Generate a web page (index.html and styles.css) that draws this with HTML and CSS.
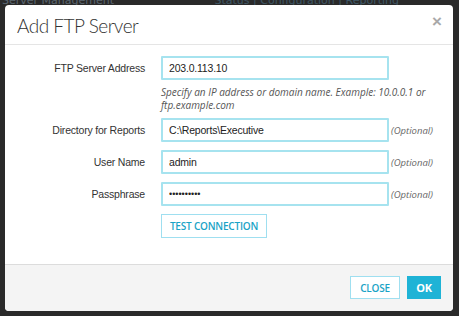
FILE: index.html
```html
<!DOCTYPE html>
<html lang="en">
<head>
    <meta charset="UTF-8">
    <meta name="viewport" content="width=device-width, initial-scale=1.0">
    <title>Add FTP Server</title>
    <link rel="stylesheet" href="styles.css">
</head>
<body>
    <div class="backdrop-bar">
        <span class="crumb">Server Management</span>
        <span class="tabs">Status | Configuration | Reporting</span>
    </div>
    <div class="modal">
        <div class="modal-header">
            <h1>Add FTP Server</h1>
            <span class="close-x">&times;</span>
        </div>
        <form class="modal-body">
            <label for="address">FTP Server Address</label>
            <input type="text" id="address" value="203.0.113.10">
            <span></span>

            <p class="help">Specify an IP address or domain name. Example: 10.0.0.1 or ftp.example.com</p>

            <label for="dir">Directory for Reports</label>
            <input type="text" id="dir" value="C:\Reports\Executive">
            <span class="optional">(Optional)</span>

            <label for="user">User Name</label>
            <input type="text" id="user" value="admin">
            <span class="optional">(Optional)</span>

            <label for="pass">Passphrase</label>
            <input type="password" id="pass" class="secret" value="secretpwd1">
            <span class="optional">(Optional)</span>

            <div class="test-row">
                <button type="button" class="btn btn-outline">TEST CONNECTION</button>
            </div>
        </form>
        <div class="modal-footer">
            <button type="button" class="btn btn-outline">CLOSE</button>
            <button type="button" class="btn btn-primary">OK</button>
        </div>
    </div>
</body>
</html>
```

FILE: styles.css
```css
* {
    margin: 0;
    padding: 0;
    box-sizing: border-box;
}

body {
    width: 459px;
    height: 316px;
    overflow: hidden;
    background: #2a2a2a;
    padding: 5px 6px 5px 5px;
    font-family: Tahoma, "DejaVu Sans", "Liberation Sans", sans-serif;
    position: relative;
}

.backdrop-bar {
    position: absolute;
    top: -6px;
    left: 2px;
    right: 0;
    display: flex;
    justify-content: space-between;
    color: #5a6670;
    font-size: 11px;
}

.tabs {
    margin-right: 60px;
    color: #3f5866;
}

.modal {
    position: relative;
    width: 448px;
    height: 306px;
    background: #fff;
    border-radius: 4px;
    display: flex;
    flex-direction: column;
    overflow: hidden;
}

.modal-header {
    height: 40px;
    border-bottom: 1px solid #e5e5e5;
    padding: 0 12px;
    display: flex;
    align-items: center;
    justify-content: space-between;
}

.modal-header h1 {
    font-family: Lato, "Open Sans", sans-serif;
    font-weight: 300;
    font-size: 19px;
    letter-spacing: -0.5px;
    color: #333;
    margin-top: 1px;
}

.close-x {
    font-family: "Liberation Sans", sans-serif;
    font-size: 17px;
    font-weight: bold;
    color: #a9a9a9;
    margin-top: -6px;
    margin-right: -1px;
}

.modal-body {
    flex: 1;
    display: grid;
    grid-template-columns: 140px 228px auto;
    column-gap: 16px;
    row-gap: 8px;
    align-content: start;
    align-items: center;
    padding: 11px 0 0 0;
}

.modal-body label {
    text-align: right;
    font-family: "Liberation Sans", Arial, sans-serif;
    font-size: 10.5px;
    letter-spacing: -0.2px;
    color: #333;
}

.modal-body input {
    height: 24px;
    width: 228px;
    border: 2px solid #a6e3ef;
    border-radius: 1px;
    padding: 0 6px;
    font-family: "Liberation Sans", Arial, sans-serif;
    font-size: 10.5px;
    letter-spacing: -0.2px;
    color: #222;
    outline: none;
}

.modal-body input.secret {
    font-size: 9px;
    letter-spacing: 0;
}

.optional {
    margin-left: -14px;
    font-family: "Open Sans", sans-serif;
    font-style: italic;
    font-size: 9.5px;
    color: #666;
}

.help {
    grid-column: 2 / 4;
    margin-top: -2px;
    margin-bottom: -1px;
    width: 275px;
    font-family: "Open Sans", sans-serif;
    font-style: italic;
    font-size: 10px;
    line-height: 12.5px;
    color: #555;
}

.test-row {
    grid-column: 2 / 4;
}

.btn {
    font-family: "Open Sans", sans-serif;
    font-weight: 600;
    font-size: 10px;
    letter-spacing: -0.2px;
    cursor: pointer;
}

.btn-outline {
    background: #fff;
    border: 1px solid #9fdff0;
    color: #1aa3c6;
}

.test-row .btn {
    height: 24px;
    width: 106px;
}

.modal-footer {
    height: 47px;
    background: #f4f4f4;
    border-top: 1px solid #dcdcdc;
    display: flex;
    justify-content: flex-end;
    align-items: flex-start;
    gap: 7px;
    padding: 11px 12px 0 0;
}

.modal-footer .btn {
    height: 23px;
}

.modal-footer .btn-outline {
    width: 50px;
}

.btn-primary {
    width: 34px;
    background: #1fb3d6;
    border: none;
    color: #fff;
    font-weight: 700;
    font-size: 11px;
}
```
